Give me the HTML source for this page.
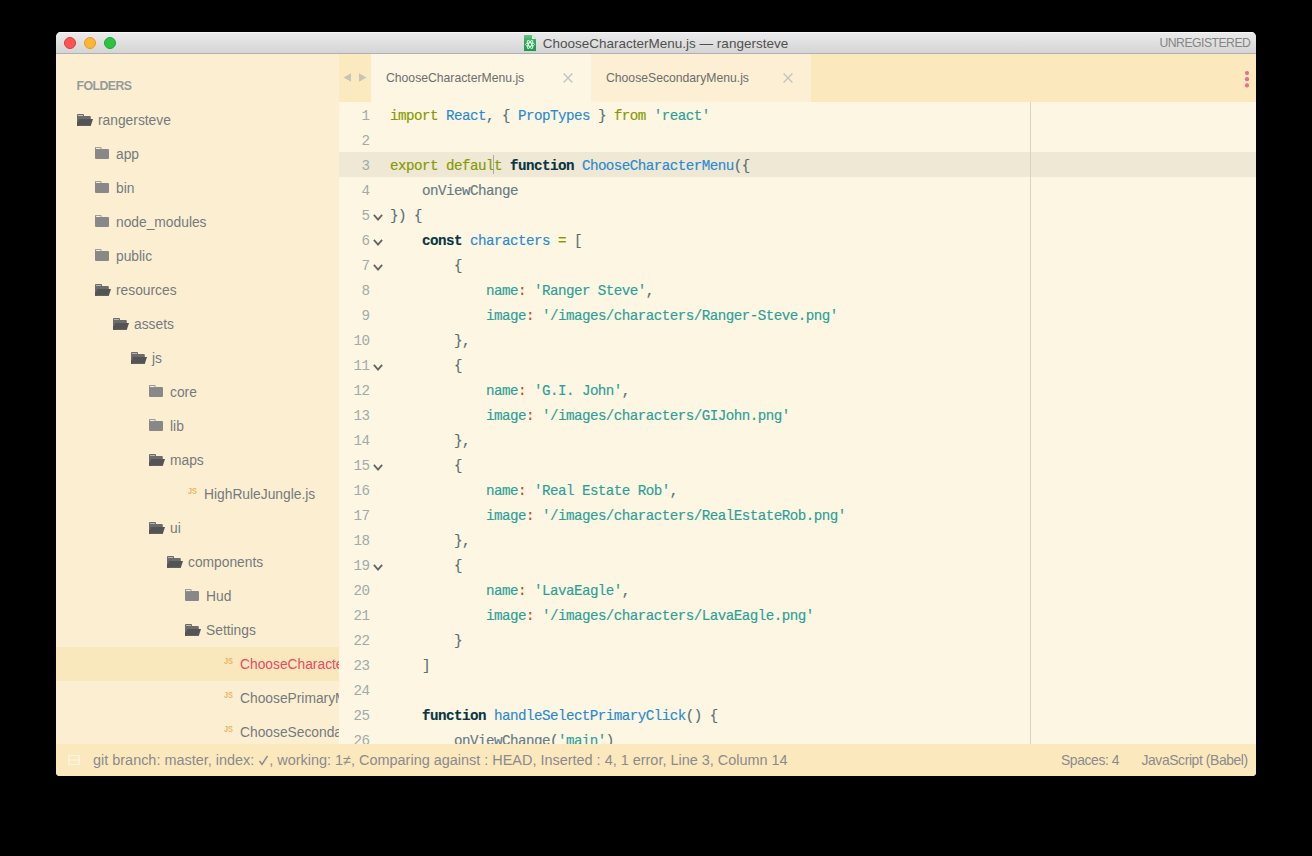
<!DOCTYPE html>
<html><head><meta charset="utf-8">
<style>
*{margin:0;padding:0;box-sizing:border-box}
html,body{width:1312px;height:856px;background:#000;overflow:hidden}
body{position:relative;font-family:"Liberation Sans",sans-serif}
#win{position:absolute;left:56px;top:32px;width:1200px;height:744px;border-radius:5px 5px 4px 4px;overflow:hidden;background:#fcefd1}
#title{position:absolute;left:0;top:0;width:1200px;height:22px;background:linear-gradient(#ebebeb,#d5d5d5);border-bottom:1px solid #b0b0b0;box-shadow:inset 0 1px 0 #f7f7f7}
.tl{position:absolute;top:5px;width:12px;height:12px;border-radius:50%}
#ttext{position:absolute;left:486.8px;top:4px;font-size:13.5px;color:#505050;white-space:nowrap;line-height:16px}
#unreg{position:absolute;left:1103.5px;top:4px;font-size:12.2px;color:#858585;letter-spacing:-0.5px;line-height:15px}
#side{position:absolute;left:0;top:22px;width:283px;height:690px;background:#fcefd1;overflow:hidden}
.fold{position:absolute;left:20.5px;top:25px;font-size:12.3px;letter-spacing:-0.55px;font-weight:bold;color:#959a9a;line-height:14px}
.row{position:absolute;left:0;width:283px;height:34px}
.row.sel{background:#fae8bd}
.nm{position:absolute;top:9px;font-size:13.8px;color:#747a7e;white-space:nowrap;line-height:17px}
.sel .nm{color:#e84a62}
.fi{position:absolute}
.js{position:absolute;top:10px;font-size:9.2px;font-weight:bold;color:#eeb466;line-height:9px;transform:scaleX(0.8);transform-origin:0 0}
#tabs{position:absolute;left:283px;top:22px;width:917px;height:48px;background:#fbe9bd}
#arr{position:absolute;left:0;top:0;width:32px;height:48px;background:#fbe9bf}
.tab{position:absolute;top:0;height:48px;width:220px}
.tab .tt{position:absolute;left:15px;top:17px;font-size:12.2px;color:#6d6d6d;white-space:nowrap;line-height:15px}
.tab svg{position:absolute}
#editor{position:absolute;left:283px;top:70px;width:917px;height:642px;background:#fdf6e3;overflow:hidden}
.ln{position:absolute;left:0;width:917px;height:25px;font-family:"Liberation Mono",monospace;font-size:14.2px;letter-spacing:-0.52px;line-height:25px;white-space:pre}
.ln.cur{background:#eee8d5}
.no{position:absolute;left:0;top:1.5px;width:30.5px;text-align:right;color:#9eacaa}
.cd{position:absolute;left:51px;top:1.5px;color:#657b83;-webkit-text-stroke:0.15px currentColor}
.chev{position:absolute;left:33.5px;top:11.5px}
#ruler{position:absolute;left:691px;top:0;width:1px;height:642px;background:#d5d6c8;z-index:2}
#status{position:absolute;left:0;top:712px;width:1200px;height:32px;background:#fbe9bd}
.st{position:absolute;top:8px;font-size:14.45px;color:#8b8a8e;white-space:nowrap;line-height:17px}
.k{color:#859900}.b{color:#268bd2}.s{color:#2aa198}.p{color:#586e75}.d{color:#073642;font-weight:bold}.o{color:#cb4b16}.v{color:#657b83}
</style></head><body>
<div id="win">
<div id="title"><div class="tl" style="left:8px;background:#fc5450;border:0.5px solid #dc3c39"></div><div class="tl" style="left:28px;background:#fdb630;border:0.5px solid #de9c28"></div><div class="tl" style="left:48px;background:#2cc340;border:0.5px solid #22a532"></div><svg style="position:absolute;left:468px;top:3px" width="12" height="16" viewBox="0 0 12 16"><defs><linearGradient id="gg" x1="0" y1="0" x2="0" y2="1"><stop offset="0" stop-color="#6cc486"/><stop offset="0.45" stop-color="#2fa55a"/><stop offset="1" stop-color="#1f9a4c"/></linearGradient></defs><path d="M0 0H8L12 4V16H0Z" fill="url(#gg)"/><path d="M8 0L12 4H8Z" fill="#e2efe4"/><g fill="none" stroke="#f4fff6" stroke-width="0.8"><ellipse cx="6" cy="9.5" rx="4.6" ry="1.7"/><ellipse cx="6" cy="9.5" rx="4.6" ry="1.7" transform="rotate(60 6 9.5)"/><ellipse cx="6" cy="9.5" rx="4.6" ry="1.7" transform="rotate(-60 6 9.5)"/></g></svg><div id="ttext">ChooseCharacterMenu.js — rangersteve</div><div id="unreg">UNREGISTERED</div></div>
<div id="side"><div class="fold">FOLDERS</div><div class="row" style="top:49px"><svg class="fi" style="left:21px;top:11px" width="17" height="12" viewBox="0 0 17 12"><path d="M0 0.9Q0 0 0.9 0H6.1Q7 0 7 0.9V2.1H12.9Q13.8 2.1 13.8 3V11.8H0Z" fill="#6c6c6c"/><path d="M1 1.1H6V1.9H1Z" fill="#c9c6bd"/><path d="M2 5.1H16L13.8 11.8H0Z" fill="#545454"/><path d="M0 8H2V11.8H0Z" fill="#545454"/></svg><div class="nm" style="left:42px">rangersteve</div></div><div class="row" style="top:83px"><svg class="fi" style="left:39px;top:10px" width="14" height="12" viewBox="0 0 14 12"><path d="M0 1Q0 0 1 0H5.5Q6.5 0 6.5 1V2H13Q14 2 14 3V11Q14 12 13 12H1Q0 12 0 11Z" fill="#888888"/><path d="M0.9 0.8H5.7V2.1H0.9Z" fill="#f4ecda"/></svg><div class="nm" style="left:60px">app</div></div><div class="row" style="top:117px"><svg class="fi" style="left:39px;top:10px" width="14" height="12" viewBox="0 0 14 12"><path d="M0 1Q0 0 1 0H5.5Q6.5 0 6.5 1V2H13Q14 2 14 3V11Q14 12 13 12H1Q0 12 0 11Z" fill="#888888"/><path d="M0.9 0.8H5.7V2.1H0.9Z" fill="#f4ecda"/></svg><div class="nm" style="left:60px">bin</div></div><div class="row" style="top:151px"><svg class="fi" style="left:39px;top:10px" width="14" height="12" viewBox="0 0 14 12"><path d="M0 1Q0 0 1 0H5.5Q6.5 0 6.5 1V2H13Q14 2 14 3V11Q14 12 13 12H1Q0 12 0 11Z" fill="#888888"/><path d="M0.9 0.8H5.7V2.1H0.9Z" fill="#f4ecda"/></svg><div class="nm" style="left:60px">node_modules</div></div><div class="row" style="top:185px"><svg class="fi" style="left:39px;top:10px" width="14" height="12" viewBox="0 0 14 12"><path d="M0 1Q0 0 1 0H5.5Q6.5 0 6.5 1V2H13Q14 2 14 3V11Q14 12 13 12H1Q0 12 0 11Z" fill="#888888"/><path d="M0.9 0.8H5.7V2.1H0.9Z" fill="#f4ecda"/></svg><div class="nm" style="left:60px">public</div></div><div class="row" style="top:219px"><svg class="fi" style="left:39px;top:11px" width="17" height="12" viewBox="0 0 17 12"><path d="M0 0.9Q0 0 0.9 0H6.1Q7 0 7 0.9V2.1H12.9Q13.8 2.1 13.8 3V11.8H0Z" fill="#6c6c6c"/><path d="M1 1.1H6V1.9H1Z" fill="#c9c6bd"/><path d="M2 5.1H16L13.8 11.8H0Z" fill="#545454"/><path d="M0 8H2V11.8H0Z" fill="#545454"/></svg><div class="nm" style="left:60px">resources</div></div><div class="row" style="top:253px"><svg class="fi" style="left:57px;top:11px" width="17" height="12" viewBox="0 0 17 12"><path d="M0 0.9Q0 0 0.9 0H6.1Q7 0 7 0.9V2.1H12.9Q13.8 2.1 13.8 3V11.8H0Z" fill="#6c6c6c"/><path d="M1 1.1H6V1.9H1Z" fill="#c9c6bd"/><path d="M2 5.1H16L13.8 11.8H0Z" fill="#545454"/><path d="M0 8H2V11.8H0Z" fill="#545454"/></svg><div class="nm" style="left:78px">assets</div></div><div class="row" style="top:287px"><svg class="fi" style="left:75px;top:11px" width="17" height="12" viewBox="0 0 17 12"><path d="M0 0.9Q0 0 0.9 0H6.1Q7 0 7 0.9V2.1H12.9Q13.8 2.1 13.8 3V11.8H0Z" fill="#6c6c6c"/><path d="M1 1.1H6V1.9H1Z" fill="#c9c6bd"/><path d="M2 5.1H16L13.8 11.8H0Z" fill="#545454"/><path d="M0 8H2V11.8H0Z" fill="#545454"/></svg><div class="nm" style="left:96px">js</div></div><div class="row" style="top:321px"><svg class="fi" style="left:93px;top:10px" width="14" height="12" viewBox="0 0 14 12"><path d="M0 1Q0 0 1 0H5.5Q6.5 0 6.5 1V2H13Q14 2 14 3V11Q14 12 13 12H1Q0 12 0 11Z" fill="#888888"/><path d="M0.9 0.8H5.7V2.1H0.9Z" fill="#f4ecda"/></svg><div class="nm" style="left:114px">core</div></div><div class="row" style="top:355px"><svg class="fi" style="left:93px;top:10px" width="14" height="12" viewBox="0 0 14 12"><path d="M0 1Q0 0 1 0H5.5Q6.5 0 6.5 1V2H13Q14 2 14 3V11Q14 12 13 12H1Q0 12 0 11Z" fill="#888888"/><path d="M0.9 0.8H5.7V2.1H0.9Z" fill="#f4ecda"/></svg><div class="nm" style="left:114px">lib</div></div><div class="row" style="top:389px"><svg class="fi" style="left:93px;top:11px" width="17" height="12" viewBox="0 0 17 12"><path d="M0 0.9Q0 0 0.9 0H6.1Q7 0 7 0.9V2.1H12.9Q13.8 2.1 13.8 3V11.8H0Z" fill="#6c6c6c"/><path d="M1 1.1H6V1.9H1Z" fill="#c9c6bd"/><path d="M2 5.1H16L13.8 11.8H0Z" fill="#545454"/><path d="M0 8H2V11.8H0Z" fill="#545454"/></svg><div class="nm" style="left:114px">maps</div></div><div class="row" style="top:423px"><div class="js" style="left:132px">JS</div><div class="nm" style="left:148px">HighRuleJungle.js</div></div><div class="row" style="top:457px"><svg class="fi" style="left:93px;top:11px" width="17" height="12" viewBox="0 0 17 12"><path d="M0 0.9Q0 0 0.9 0H6.1Q7 0 7 0.9V2.1H12.9Q13.8 2.1 13.8 3V11.8H0Z" fill="#6c6c6c"/><path d="M1 1.1H6V1.9H1Z" fill="#c9c6bd"/><path d="M2 5.1H16L13.8 11.8H0Z" fill="#545454"/><path d="M0 8H2V11.8H0Z" fill="#545454"/></svg><div class="nm" style="left:114px">ui</div></div><div class="row" style="top:491px"><svg class="fi" style="left:111px;top:11px" width="17" height="12" viewBox="0 0 17 12"><path d="M0 0.9Q0 0 0.9 0H6.1Q7 0 7 0.9V2.1H12.9Q13.8 2.1 13.8 3V11.8H0Z" fill="#6c6c6c"/><path d="M1 1.1H6V1.9H1Z" fill="#c9c6bd"/><path d="M2 5.1H16L13.8 11.8H0Z" fill="#545454"/><path d="M0 8H2V11.8H0Z" fill="#545454"/></svg><div class="nm" style="left:132px">components</div></div><div class="row" style="top:525px"><svg class="fi" style="left:129px;top:10px" width="14" height="12" viewBox="0 0 14 12"><path d="M0 1Q0 0 1 0H5.5Q6.5 0 6.5 1V2H13Q14 2 14 3V11Q14 12 13 12H1Q0 12 0 11Z" fill="#888888"/><path d="M0.9 0.8H5.7V2.1H0.9Z" fill="#f4ecda"/></svg><div class="nm" style="left:150px">Hud</div></div><div class="row" style="top:559px"><svg class="fi" style="left:129px;top:11px" width="17" height="12" viewBox="0 0 17 12"><path d="M0 0.9Q0 0 0.9 0H6.1Q7 0 7 0.9V2.1H12.9Q13.8 2.1 13.8 3V11.8H0Z" fill="#6c6c6c"/><path d="M1 1.1H6V1.9H1Z" fill="#c9c6bd"/><path d="M2 5.1H16L13.8 11.8H0Z" fill="#545454"/><path d="M0 8H2V11.8H0Z" fill="#545454"/></svg><div class="nm" style="left:150px">Settings</div></div><div class="row sel" style="top:593px"><div class="js" style="left:168px">JS</div><div class="nm" style="left:184px">ChooseCharacterMenu.js</div></div><div class="row" style="top:627px"><div class="js" style="left:168px">JS</div><div class="nm" style="left:184px">ChoosePrimaryMenu.js</div></div><div class="row" style="top:661px"><div class="js" style="left:168px">JS</div><div class="nm" style="left:184px">ChooseSecondaryMenu.js</div></div></div>
<div id="tabs"><div id="arr"><svg style="position:absolute;left:0;top:0" width="32" height="48" viewBox="0 0 32 48"><path d="M12 19.3V27.8L4.7 23.55Z" fill="#c6c4b3"/><path d="M20 19.3V27.8L27.3 23.55Z" fill="#c6c4b3"/></svg></div><div class="tab" style="left:32px;background:#fdf6e3"><div class="tt">ChooseCharacterMenu.js</div><svg style="left:192px;top:19px" width="10" height="10" viewBox="0 0 10 10"><path d="M0.6 0.6L9.4 9.4M9.4 0.6L0.6 9.4" stroke="#c2c4bd" stroke-width="1.35"/></svg></div><div class="tab" style="left:252px;background:#fcefd3"><div class="tt">ChooseSecondaryMenu.js</div><svg style="left:192px;top:19px" width="10" height="10" viewBox="0 0 10 10"><path d="M0.6 0.6L9.4 9.4M9.4 0.6L0.6 9.4" stroke="#c2c4bd" stroke-width="1.35"/></svg></div><svg style="position:absolute;left:904.6px;top:15.5px" width="6" height="18" viewBox="0 0 6 18"><circle cx="3" cy="3" r="2.1" fill="#ea6d8e"/><circle cx="3" cy="9.2" r="2.1" fill="#ea6d8e"/><circle cx="3" cy="15.4" r="2.1" fill="#ea6d8e"/></svg></div>
<div id="editor"><div id="ruler"></div><div class="ln" style="top:0px"><span class="no">1</span><span class="cd"><span class="k">import</span> <span class="b">React</span><span class="p">, { </span><span class="b">PropTypes</span><span class="p"> } </span><span class="k">from</span> <span class="s">&#x27;react&#x27;</span></span></div><div class="ln" style="top:25px"><span class="no">2</span><span class="cd"></span></div><div class="ln cur" style="top:50px"><span class="no">3</span><span class="cd"><span class="k">export</span> <span class="k">default</span> <span class="d">function</span> <span class="b">ChooseCharacterMenu</span><span class="p">({</span></span></div><div class="ln" style="top:75px"><span class="no">4</span><span class="cd">    <span class="v">onViewChange</span></span></div><div class="ln" style="top:100px"><span class="no">5</span><svg class="chev" width="11" height="8" viewBox="0 0 11 8"><path d="M0.9 0.9L5 5.7L9.1 0.9" fill="none" stroke="#646464" stroke-width="1.8"/></svg><span class="cd"><span class="p">}) {</span></span></div><div class="ln" style="top:125px"><span class="no">6</span><svg class="chev" width="11" height="8" viewBox="0 0 11 8"><path d="M0.9 0.9L5 5.7L9.1 0.9" fill="none" stroke="#646464" stroke-width="1.8"/></svg><span class="cd">    <span class="d">const</span> <span class="b">characters</span> <span class="k">=</span> <span class="p">[</span></span></div><div class="ln" style="top:150px"><span class="no">7</span><svg class="chev" width="11" height="8" viewBox="0 0 11 8"><path d="M0.9 0.9L5 5.7L9.1 0.9" fill="none" stroke="#646464" stroke-width="1.8"/></svg><span class="cd">        <span class="p">{</span></span></div><div class="ln" style="top:175px"><span class="no">8</span><span class="cd">            <span class="s">name</span><span class="o">:</span> <span class="s">&#x27;Ranger Steve&#x27;</span><span class="p">,</span></span></div><div class="ln" style="top:200px"><span class="no">9</span><span class="cd">            <span class="s">image</span><span class="o">:</span> <span class="s">&#x27;/images/characters/Ranger-Steve.png&#x27;</span></span></div><div class="ln" style="top:225px"><span class="no">10</span><span class="cd">        <span class="p">},</span></span></div><div class="ln" style="top:250px"><span class="no">11</span><svg class="chev" width="11" height="8" viewBox="0 0 11 8"><path d="M0.9 0.9L5 5.7L9.1 0.9" fill="none" stroke="#646464" stroke-width="1.8"/></svg><span class="cd">        <span class="p">{</span></span></div><div class="ln" style="top:275px"><span class="no">12</span><span class="cd">            <span class="s">name</span><span class="o">:</span> <span class="s">&#x27;G.I. John&#x27;</span><span class="p">,</span></span></div><div class="ln" style="top:300px"><span class="no">13</span><span class="cd">            <span class="s">image</span><span class="o">:</span> <span class="s">&#x27;/images/characters/GIJohn.png&#x27;</span></span></div><div class="ln" style="top:325px"><span class="no">14</span><span class="cd">        <span class="p">},</span></span></div><div class="ln" style="top:350px"><span class="no">15</span><svg class="chev" width="11" height="8" viewBox="0 0 11 8"><path d="M0.9 0.9L5 5.7L9.1 0.9" fill="none" stroke="#646464" stroke-width="1.8"/></svg><span class="cd">        <span class="p">{</span></span></div><div class="ln" style="top:375px"><span class="no">16</span><span class="cd">            <span class="s">name</span><span class="o">:</span> <span class="s">&#x27;Real Estate Rob&#x27;</span><span class="p">,</span></span></div><div class="ln" style="top:400px"><span class="no">17</span><span class="cd">            <span class="s">image</span><span class="o">:</span> <span class="s">&#x27;/images/characters/RealEstateRob.png&#x27;</span></span></div><div class="ln" style="top:425px"><span class="no">18</span><span class="cd">        <span class="p">},</span></span></div><div class="ln" style="top:450px"><span class="no">19</span><svg class="chev" width="11" height="8" viewBox="0 0 11 8"><path d="M0.9 0.9L5 5.7L9.1 0.9" fill="none" stroke="#646464" stroke-width="1.8"/></svg><span class="cd">        <span class="p">{</span></span></div><div class="ln" style="top:475px"><span class="no">20</span><span class="cd">            <span class="s">name</span><span class="o">:</span> <span class="s">&#x27;LavaEagle&#x27;</span><span class="p">,</span></span></div><div class="ln" style="top:500px"><span class="no">21</span><span class="cd">            <span class="s">image</span><span class="o">:</span> <span class="s">&#x27;/images/characters/LavaEagle.png&#x27;</span></span></div><div class="ln" style="top:525px"><span class="no">22</span><span class="cd">        <span class="p">}</span></span></div><div class="ln" style="top:550px"><span class="no">23</span><span class="cd">    <span class="p">]</span></span></div><div class="ln" style="top:575px"><span class="no">24</span><span class="cd"></span></div><div class="ln" style="top:600px"><span class="no">25</span><span class="cd">    <span class="d">function</span> <span class="b">handleSelectPrimaryClick</span><span class="p">() {</span></span></div><div class="ln" style="top:625px"><span class="no">26</span><span class="cd">        <span class="v">onViewChange</span><span class="p">(</span><span class="s">&#x27;main&#x27;</span><span class="p">)</span></span></div><div style="position:absolute;left:154px;top:53px;width:1px;height:19px;background:#aaada5"></div></div>
<div id="status"><svg style="position:absolute;left:12px;top:11px" width="12" height="10" viewBox="0 0 12 10"><path d="M0.6 0.6H11.4V9.4H0.6ZM0.6 5H11.4" fill="none" stroke="#fdf4e0" stroke-width="1.2"/></svg><div class="st" style="left:37px">git branch: master, index: <svg width="11" height="11" viewBox="0 0 11 11" style="vertical-align:-1px"><path d="M1.5 6L4 9.5L9.5 0.8" fill="none" stroke="#8b8a8e" stroke-width="1.5"/></svg>, working: 1≠, Comparing against : HEAD, Inserted : 4, 1 error, Line 3, Column 14</div><div class="st" style="left:1005px;top:8px;font-size:13.9px;letter-spacing:-0.4px">Spaces: 4</div><div class="st" style="left:1085.5px;top:8px;font-size:13.9px;letter-spacing:-0.4px">JavaScript (Babel)</div></div>
</div>
</body></html>
